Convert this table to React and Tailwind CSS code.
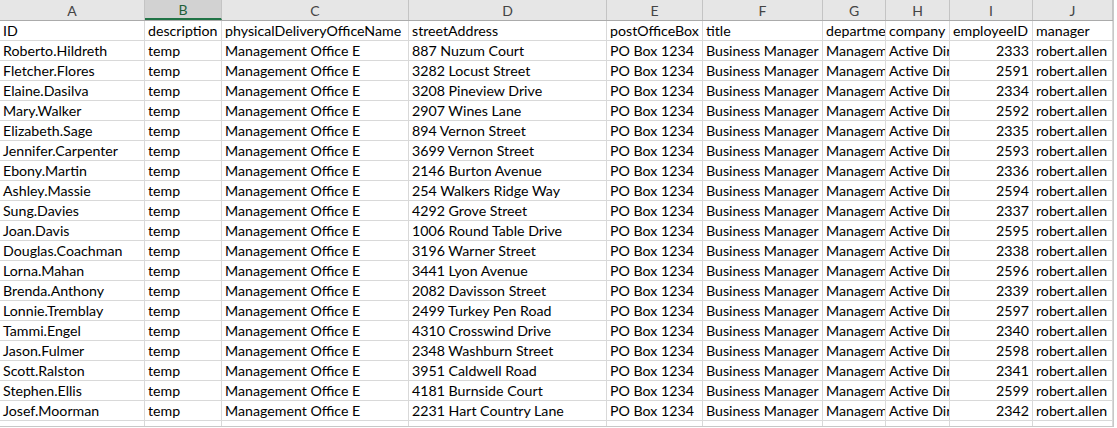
import React from 'react'

const cols = [
    { key: 'A', w: 'w-[145px]' },
    { key: 'B', w: 'w-[77px]' },
    { key: 'C', w: 'w-[187px]' },
    { key: 'D', w: 'w-[198px]' },
    { key: 'E', w: 'w-[96px]' },
    { key: 'F', w: 'w-[120px]' },
    { key: 'G', w: 'w-[63px]' },
    { key: 'H', w: 'w-[64px]' },
    { key: 'I', w: 'w-[83px]' },
    { key: 'J', w: 'w-[80px]' },
]

const people = [
    ['Roberto.Hildreth', '887 Nuzum Court', '2333'],
    ['Fletcher.Flores', '3282 Locust Street', '2591'],
    ['Elaine.Dasilva', '3208 Pineview Drive', '2334'],
    ['Mary.Walker', '2907 Wines Lane', '2592'],
    ['Elizabeth.Sage', '894 Vernon Street', '2335'],
    ['Jennifer.Carpenter', '3699 Vernon Street', '2593'],
    ['Ebony.Martin', '2146 Burton Avenue', '2336'],
    ['Ashley.Massie', '254 Walkers Ridge Way', '2594'],
    ['Sung.Davies', '4292 Grove Street', '2337'],
    ['Joan.Davis', '1006 Round Table Drive', '2595'],
    ['Douglas.Coachman', '3196 Warner Street', '2338'],
    ['Lorna.Mahan', '3441 Lyon Avenue', '2596'],
    ['Brenda.Anthony', '2082 Davisson Street', '2339'],
    ['Lonnie.Tremblay', '2499 Turkey Pen Road', '2597'],
    ['Tammi.Engel', '4310 Crosswind Drive', '2340'],
    ['Jason.Fulmer', '2348 Washburn Street', '2598'],
    ['Scott.Ralston', '3951 Caldwell Road', '2341'],
    ['Stephen.Ellis', '4181 Burnside Court', '2599'],
    ['Josef.Moorman', '2231 Hart Country Lane', '2342'],
    ['Leticia.Wilkins', '1152 Pinchelone Street', '2600'],
]

const header = ['ID', 'description', 'physicalDeliveryOfficeName', 'streetAddress', 'postOfficeBox', 'title', 'departme', 'company', 'employeeID', 'manager']

const rows = [
    header,
    ...people.map((p) => [p[0], 'temp', 'Management Office E', p[1], 'PO Box 1234', 'Business Manager', 'Managem', 'Active Dir', p[2], 'robert.allen']),
]

const App = () => {
    return (
        <div className="w-[1117px] h-[428px] bg-white overflow-hidden text-black" style={{ fontFamily: 'Lato, "Liberation Sans", sans-serif' }}>
            <div className="w-[1114px] h-[427px] border-r border-b border-[#c8c8c8] overflow-hidden">

                {/* column letters */}
                <div className="flex h-[21px] border-b border-[#ababab] bg-[#e6e6e6]">
                    {cols.map((c) => (
                        <div
                            key={c.key}
                            className={`${c.w} shrink-0 border-r border-[#c4c4c4] flex items-center justify-center text-[14px] ${c.key === 'B' ? 'bg-[#d2d2d2] text-[#1f5f3a] border-b-2 border-b-[#217346]' : 'text-[#444]'}`}
                        >
                            {c.key}
                        </div>
                    ))}
                </div>

                {rows.map((r, i) => (
                    <div key={i} className="flex h-[20px] border-b border-[#d9d9d9]">
                        {cols.map((c, j) => (
                            <div
                                key={c.key}
                                className={`${c.w} shrink-0 border-r border-[#d9d9d9] px-[3px] pt-[1px] overflow-hidden whitespace-nowrap text-[14.2px] leading-[18px] ${i > 0 && j === 8 ? 'text-right' : ''}`}
                            >
                                {r[j]}
                            </div>
                        ))}
                    </div>
                ))}

            </div>
        </div>
    )
}

export default App
